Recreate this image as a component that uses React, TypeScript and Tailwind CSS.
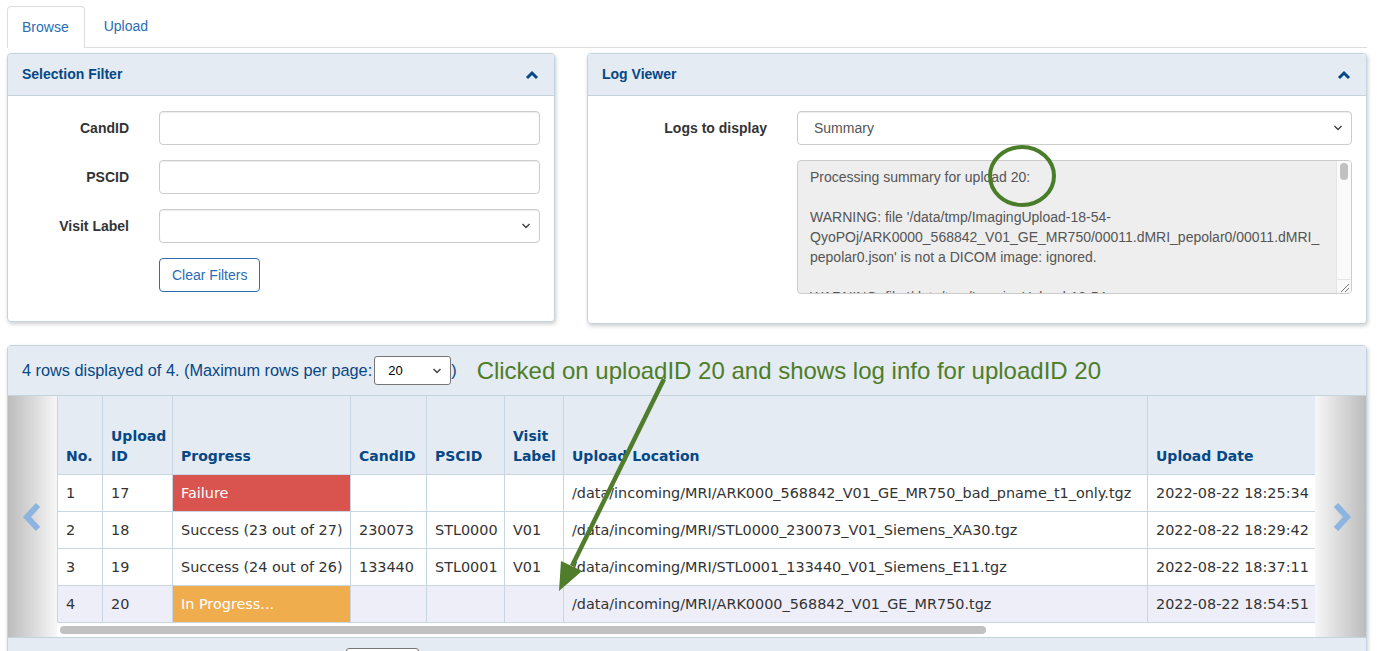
import React from 'react';

const sans = "font-['Liberation_Sans',Arial,Helvetica,sans-serif]";
const verdana = "font-['DejaVu_Sans',Verdana,sans-serif]";

function ChevronUp() {
    return (
        <svg width="14" height="10" viewBox="0 0 14 10">
            <polyline points="2,8 7,3 12,8" fill="none" stroke="#064785" strokeWidth="3" />
        </svg>
    );
}

function SelectArrow() {
    return (
        <svg width="10" height="7" viewBox="0 0 10 7" className="absolute right-[8px] top-1/2 -translate-y-1/2">
            <polyline points="1.5,1.5 5,5 8.5,1.5" fill="none" stroke="#444" strokeWidth="1.5" />
        </svg>
    );
}

function Panel({ title, className, children }: { title: string; className?: string; children: React.ReactNode }) {
    return (
        <div className={`rounded-[4px] border border-[#c5d3df] bg-white shadow-[1px_2px_4px_rgba(0,0,0,0.2)] ${className || ''}`}>
            <div className="flex h-[42px] items-center justify-between rounded-t-[4px] border-b border-[#c5d3df] bg-[#e4ebf3] pl-[14px] pr-[15px]">
                <span className="text-[14px] font-bold text-[#064785]">{title}</span>
                <ChevronUp />
            </div>
            {children}
        </div>
    );
}

const inputClass = "h-[34px] w-full rounded-[4px] border border-[#cccccc] bg-white shadow-[inset_0_1px_1px_rgba(0,0,0,0.075)]";
const labelClass = "pr-[15px] text-right text-[14px] font-bold text-[#333333]";

const rows = [
    { no: 1, id: 17, progress: 'Failure', tone: 'fail', cand: '', pscid: '', visit: '', loc: '/data/incoming/MRI/ARK000_568842_V01_GE_MR750_bad_pname_t1_only.tgz', date: '2022-08-22 18:25:34' },
    { no: 2, id: 18, progress: 'Success (23 out of 27)', tone: '', cand: '230073', pscid: 'STL0000', visit: 'V01', loc: '/data/incoming/MRI/STL0000_230073_V01_Siemens_XA30.tgz', date: '2022-08-22 18:29:42' },
    { no: 3, id: 19, progress: 'Success (24 out of 26)', tone: '', cand: '133440', pscid: 'STL0001', visit: 'V01', loc: '/data/incoming/MRI/STL0001_133440_V01_Siemens_E11.tgz', date: '2022-08-22 18:37:11' },
    { no: 4, id: 20, progress: 'In Progress...', tone: 'prog', cand: '', pscid: '', visit: '', loc: '/data/incoming/MRI/ARK0000_568842_V01_GE_MR750.tgz', date: '2022-08-22 18:54:51' },
];

const th = "border border-t-0 border-[#c8d6e2] px-[8px] pb-[8px] align-bottom text-left text-[14px] font-bold leading-[20px] text-[#064785]";
const td = "border border-[#c8d6e2] px-[8px] py-[8px] text-[14.4px] leading-[20px] text-[#333333] whitespace-nowrap";

function SideChevron({ dir }: { dir: 'left' | 'right' }) {
    return (
        <svg width="22" height="30" viewBox="0 0 22 30">
            {dir === 'left' ? (
                <polyline points="16,3 5,15 16,27" fill="none" stroke="#8db4de" strokeWidth="6" />
            ) : (
                <polyline points="6,3 17,15 6,27" fill="none" stroke="#8db4de" strokeWidth="6" />
            )}
        </svg>
    );
}

export default function App() {
    return (
        <div className={`relative h-[651px] w-[1379px] overflow-hidden bg-white ${sans}`}>
            {/* tabs */}
            <div className="ml-[7px] mr-[12px] mt-[6px] flex border-b border-[#dddddd]">
                <div className="-mb-px mr-[4px] flex h-[42px] items-center rounded-t-[4px] border border-b-0 border-[#dddddd] bg-white pl-[14px] pr-[15px] text-[14px] text-[#2a6db5]">Browse</div>
                <div className="flex h-[41px] items-center px-[15px] text-[14px] text-[#2a6db5]">Upload</div>
            </div>

            <div className="ml-[7px] mr-[12px] mt-[5px] flex items-start gap-[32px]">
                <Panel title="Selection Filter" className="w-[548px]">
                    <div className="grid grid-cols-[122px_1fr] items-center gap-y-[15px] pb-[29px] pl-[14px] pr-[14px] pt-[15px]">
                        <div className={labelClass}>CandID</div>
                        <div className="pl-[15px]"><div className={inputClass} /></div>
                        <div className={labelClass}>PSCID</div>
                        <div className="pl-[15px]"><div className={inputClass} /></div>
                        <div className={labelClass}>Visit Label</div>
                        <div className="pl-[15px]">
                            <div className={`relative ${inputClass}`}><SelectArrow /></div>
                        </div>
                        <div />
                        <div className="pl-[15px]">
                            <button className="h-[34px] rounded-[4px] border border-[#2a6db5] bg-white px-[12px] text-[14px] text-[#2a6db5]">Clear Filters</button>
                        </div>
                    </div>
                </Panel>

                <Panel title="Log Viewer" className="flex-1">
                    <div className="grid grid-cols-[180px_1fr] items-start gap-y-[15px] pb-[29px] pl-[14px] pr-[14px] pt-[15px]">
                        <div className={`${labelClass} leading-[34px]`}>Logs to display</div>
                        <div className="pl-[15px]">
                            <div className={`relative flex items-center pl-[16px] text-[14px] text-[#555555] ${inputClass}`}>
                                Summary
                                <SelectArrow />
                            </div>
                        </div>
                        <div />
                        <div className="pl-[15px]">
                            <div className="flex h-[134px] overflow-hidden rounded-[4px] border border-[#cccccc] bg-[#eeeeee]">
                                <div className="flex-1 overflow-hidden whitespace-pre pl-[12px] pt-[6px] text-[14px] leading-[20px] text-[#555555]">
                                    <div>Processing summary for upload 20:</div>
                                    <div>&nbsp;</div>
                                    <div>WARNING: file '/data/tmp/ImagingUpload-18-54-</div>
                                    <div>QyoPOj/ARK0000_568842_V01_GE_MR750/00011.dMRI_pepolar0/00011.dMRI_</div>
                                    <div>pepolar0.json' is not a DICOM image: ignored.</div>
                                    <div>&nbsp;</div>
                                    <div>WARNING: file '/data/tmp/ImagingUpload-18-54-</div>
                                </div>
                                <div className="relative w-[15px] border-l border-[#e6e6e6] bg-[#fafafa]">
                                    <div className="mx-auto mt-[2px] h-[17px] w-[8px] rounded-full bg-[#c1c1c1]" />
                                    <div className="absolute bottom-0 left-0 h-[14px] w-[14px] border-t border-[#e6e6e6]">
                                        <svg width="14" height="14" viewBox="0 0 14 14">
                                            <line x1="12" y1="4" x2="4" y2="12" stroke="#777" strokeWidth="1" />
                                            <line x1="12" y1="8" x2="8" y2="12" stroke="#777" strokeWidth="1" />
                                        </svg>
                                    </div>
                                </div>
                            </div>
                        </div>
                    </div>
                </Panel>
            </div>

            {/* data table panel */}
            <div className="ml-[7px] mr-[12px] mt-[21px] rounded-[4px] border border-[#c5d3df] bg-white shadow-[1px_2px_4px_rgba(0,0,0,0.2)]">
                <div className="flex h-[50px] items-center border-b border-[#c5d3df] bg-[#e4ebf3] pl-[14px]">
                    <span className="text-[16.3px] text-[#064785]">4 rows displayed of 4. (Maximum rows per page:</span>
                    <div className="relative ml-[2px] flex h-[29px] w-[77px] items-center rounded-[3px] border border-[#767676] bg-white pl-[13px] text-[13px] text-black">
                        20
                        <SelectArrow />
                    </div>
                    <span className="text-[16.3px] text-[#064785]">)</span>
                    <span className="ml-[20px] text-[24px] text-[#4e7d26]">Clicked on uploadID 20 and shows log info for uploadID 20</span>
                </div>

                <div className="flex h-[241px]">
                    <div className="flex w-[49px] items-center justify-center bg-gradient-to-r from-[#bcbcbc] to-[#f7f7f7]">
                        <SideChevron dir="left" />
                    </div>
                    <div className={`flex min-w-0 flex-1 flex-col overflow-hidden ${verdana}`}>
                        <table className="w-[1704px] table-fixed border-collapse">
                            <colgroup>
                                <col className="w-[45px]" />
                                <col className="w-[70px]" />
                                <col className="w-[178px]" />
                                <col className="w-[76px]" />
                                <col className="w-[78px]" />
                                <col className="w-[59px]" />
                                <col className="w-[584px]" />
                                <col className="w-[170px]" />
                                <col className="w-[110px]" />
                                <col className="w-[90px]" />
                                <col className="w-[80px]" />
                                <col className="w-[82px]" />
                                <col className="w-[82px]" />
                            </colgroup>
                            <thead>
                                <tr className="h-[78px] bg-[#e4ebf3]">
                                    <th className={th}>No.</th>
                                    <th className={th}>Upload<br />ID</th>
                                    <th className={th}>Progress</th>
                                    <th className={th}>CandID</th>
                                    <th className={th}>PSCID</th>
                                    <th className={th}>Visit<br />Label</th>
                                    <th className={th}>Upload Location</th>
                                    <th className={th}>Upload Date</th>
                                    <th className={th} />
                                    <th className={th} />
                                    <th className={th} />
                                    <th className={th} />
                                    <th className={th} />
                                </tr>
                            </thead>
                            <tbody>
                                {rows.map((r) => (
                                    <tr key={r.no} className={r.no === 4 ? 'bg-[#eeeef9]' : 'bg-white'}>
                                        <td className={td}>{r.no}</td>
                                        <td className={td}>{r.id}</td>
                                        <td className={`${td} ${r.tone === 'fail' ? 'bg-[#d9534f] !text-white' : r.tone === 'prog' ? 'bg-[#f0ad4e] !text-white' : ''}`}>{r.progress}</td>
                                        <td className={td}>{r.cand}</td>
                                        <td className={td}>{r.pscid}</td>
                                        <td className={td}>{r.visit}</td>
                                        <td className={td}>{r.loc}</td>
                                        <td className={td}>{r.date}</td>
                                        <td className={td} />
                                        <td className={td} />
                                        <td className={td} />
                                        <td className={td} />
                                        <td className={td} />
                                    </tr>
                                ))}
                            </tbody>
                        </table>
                        <div className="flex h-[16px] items-center bg-white pl-[3px]">
                            <div className="h-[8px] w-[926px] rounded-full bg-[#c1c1c1]" />
                        </div>
                    </div>
                    <div className="flex w-[51px] items-center justify-center bg-gradient-to-r from-[#f7f7f7] to-[#bcbcbc]">
                        <SideChevron dir="right" />
                    </div>
                </div>

                <div className="h-[40px] border-t border-[#c5d3df] bg-[#e4ebf3] pl-[338px] pt-[10px]">
                    <div className="h-[29px] w-[73px] rounded-[3px] border border-[#767676] bg-white" />
                </div>
            </div>

            {/* annotations */}
            <svg className="pointer-events-none absolute left-0 top-0" width="1379" height="651" viewBox="0 0 1379 651">
                <ellipse cx="1022" cy="176" rx="32" ry="29" fill="none" stroke="#4a7d2a" strokeWidth="4" />
                <line x1="664" y1="379" x2="572" y2="566" stroke="#4f7d2b" strokeWidth="4.5" />
                <polygon points="559,591 561,561 582,571" fill="#4f7d2b" />
            </svg>
        </div>
    );
}
